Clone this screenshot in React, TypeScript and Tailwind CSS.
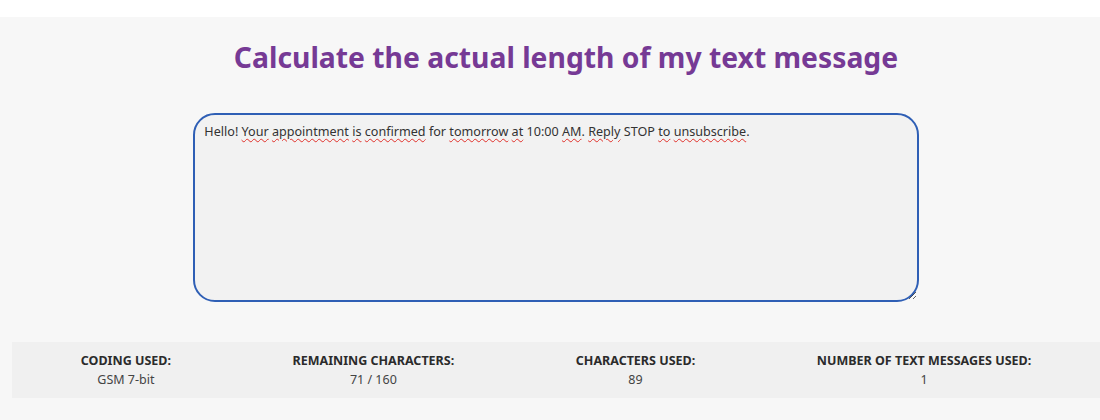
const font = { fontFamily: '"Noto Sans", "Open Sans", sans-serif' }

const misspelled = new Set(['Your', 'appointment', 'is', 'confirmed', 'tomorrow', 'at', 'AM', 'Reply', 'to', 'unsubscribe'])

const message = 'Hello! Your appointment is confirmed for tomorrow at 10:00 AM. Reply STOP to unsubscribe.'

function MessageText() {
  const parts = message.split(' ')
  return (
    <>
      {parts.map((word, i) => {
        const bare = word.replace(/[.!]$/, '')
        const tail = word.slice(bare.length)
        const space = i < parts.length - 1 ? ' ' : ''
        if (misspelled.has(bare)) {
          return (
            <span key={i}>
              <span className="underline decoration-wavy decoration-[#e0302a] decoration-1 underline-offset-2">{bare}</span>
              {tail}
              {space}
            </span>
          )
        }
        return <span key={i}>{word + space}</span>
      })}
    </>
  )
}

const stats = [
  { label: 'Coding used:', value: 'GSM 7-bit' },
  { label: 'Remaining characters:', value: '71 / 160' },
  { label: 'Characters used:', value: '89' },
  { label: 'Number of text messages used:', value: '1' },
]

export default function App() {
  return (
    <div className="h-[420px] w-[1100px] overflow-hidden bg-white text-[#333]" style={font}>
      <div className="mt-[17px] h-[403px] bg-[#f7f7f7] pl-[12px]">
        <h1 className="pl-[20px] pt-[20px] text-center text-[28.3px] font-bold leading-[40px] text-[#763a95]">
          Calculate the actual length of my text message
        </h1>

        <div className="mt-[36px] flex justify-center">
          <div className="h-[189px] w-2/3 resize overflow-auto rounded-[22px] border-2 border-[#2f5fb5] bg-[#f2f2f2] px-[9px] py-[8px] text-[12.6px] leading-[18px]">
            <MessageText />
          </div>
        </div>

        <div className="mt-[40px] flex h-[56px] items-center justify-around bg-[#f0f0f0] px-2">
          {stats.map((s) => (
            <div key={s.label} className="flex flex-col items-center text-[12.5px] leading-[19px]">
              <span className="font-bold uppercase text-[#2b2b2b]">{s.label}</span>
              <span className="text-[#444]">{s.value}</span>
            </div>
          ))}
        </div>
      </div>
    </div>
  )
}
